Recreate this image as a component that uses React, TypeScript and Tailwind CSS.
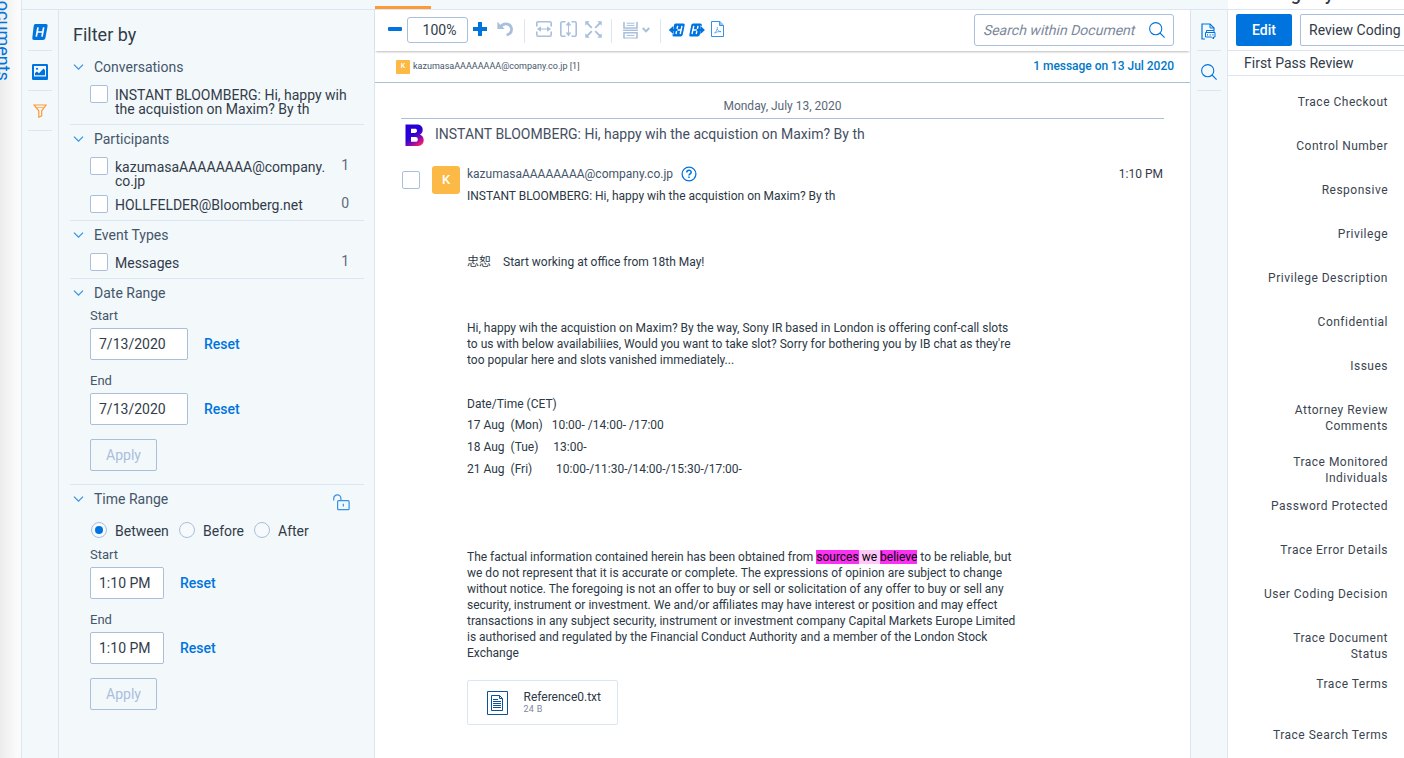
import type { ReactNode } from "react";

const BLUE = "#0074de";

function Check({ className = "" }: { className?: string }) {
  return <span className={`block h-[18px] w-[18px] shrink-0 rounded-[2px] border border-[#a9bfdb] bg-white ${className}`} />;
}

function Section({ title, children, last = false, extra }: { title: string; children: ReactNode; last?: boolean; extra?: ReactNode }) {
  return (
    <section className={`ml-[11px] mr-[10px] pt-[2px] ${last ? "" : "border-b border-[#dbe6f2]"}`}>
      <div className="flex h-6 items-center pl-[3px]">
        <svg width="12" height="8" viewBox="0 0 12 8" fill="none" stroke="#3391e6" strokeWidth="1.2" className="mr-[9px]">
          <path d="M1 1.6 5.5 6.1l4.5-4.5" />
        </svg>
        <h3 className="text-[14px] text-[#44566a]">{title}</h3>
        {extra}
      </div>
      {children}
    </section>
  );
}

function Option({ label, count, className }: { label: ReactNode; count?: string; className: string }) {
  return (
    <div className={`flex pl-5 ${className}`}>
      <Check />
      <span className="mt-[3px] ml-[7px] flex-1 whitespace-nowrap text-[14px] leading-[14px] text-[#323c49]">{label}</span>
      {count && <span className="mr-[15px] text-[14px] leading-4 text-[#5f6b7b]">{count}</span>}
    </div>
  );
}

function Field({ label, value, width }: { label: string; value: string; width: string }) {
  return (
    <div className="pl-5">
      <div className="h-[15px] text-[13px] leading-[15px] text-[#44566a]">{label}</div>
      <div className="mt-[5px] flex items-center">
        <span className={`flex h-8 items-center rounded-[2px] border border-[#a9bfdb] bg-white pl-2 text-[14px] text-[#323c49] ${width}`}>{value}</span>
        <button className="ml-4 text-[14px] font-medium text-[#0074de]">Reset</button>
      </div>
    </div>
  );
}

function Apply() {
  return (
    <button className="ml-5 flex h-8 w-[67px] items-center justify-center rounded-[2px] border border-[#a9bfdb] text-[14px] text-[#a9bfdb]">Apply</button>
  );
}

function Radio({ label, on = false, className = "" }: { label: string; on?: boolean; className?: string }) {
  return (
    <label className={`flex items-start ${className}`}>
      <span className="flex h-4 w-4 items-center justify-center rounded-full border border-[#a9bfdb] bg-[#f6fafc]">
        {on && <span className="h-2 w-2 rounded-full bg-[#0074de]" />}
      </span>
      <span className="mt-px ml-2 text-[14px] leading-4 text-[#323c49]">{label}</span>
    </label>
  );
}

function RailCell({ children }: { children: ReactNode }) {
  return <div className="flex h-10 w-6 items-center justify-center border-b border-[#dbe6f2] pt-[2px]">{children}</div>;
}

function SearchIcon() {
  return (
    <svg width="16" height="16" viewBox="0 0 16 16" fill="none" stroke={BLUE} strokeWidth="1.1">
      <circle cx="6.7" cy="6.7" r="6.1" />
      <path d="m11 11 4.6 4.6" />
    </svg>
  );
}

function Separator({ className }: { className: string }) {
  return <span className={`h-6 w-px bg-[#dbe6f2] ${className}`} />;
}

function HitArrow({ left = false }: { left?: boolean }) {
  return (
    <svg width="16" height="14" viewBox="0 0 16 14" fill="none">
      {left ? (
        <>
          <path d="M6.5.4h7.9q1.6 0 1.3 1.5L13.7 11.7q-.4 1.8-2.1 1.8H5q-1.8 0-1.5-1.6L5 2Q5.2.4 6.5.4Z" fill={BLUE} />
          <path d="M0 7 4.3 3v8Z" fill={BLUE} stroke="#fff" strokeWidth="1" paintOrder="stroke" />
          <path d="M8.7 2.8 8 5.8M7.6 8.2 7 11M13 2.8 11.2 11M8.500 7h3.800" stroke="#fff" strokeWidth="1.4" />
          <path d="M0 7 4.3 3.2v2.800H8v2H4.3v2.800Z" fill={BLUE} />
        </>
      ) : (
        <>
          <path d="M4 .4h7.5q1.6 0 1.3 1.5L10.8 11.7q-.4 1.8-2.1 1.8H1.600q-1.6 0-1.3-1.6L2.3 2Q2.6.4 4 .4Z" fill={BLUE} />
          <path d="M15.700 7 11.500 3v8Z" fill={BLUE} stroke="#fff" strokeWidth="1" paintOrder="stroke" />
          <path d="M4.8 2.8 3 11M9 2.8 8.4 5.8M7.9 8.2 7.2 11M4 7h3.800" stroke="#fff" strokeWidth="1.4" />
          <path d="M15.700 7 11.500 3.200v2.800H8.200v2h3.300v2.800Z" fill={BLUE} />
        </>
      )}
    </svg>
  );
}

function Toolbar() {
  return (
    <div className="z-10 flex h-[41px] shrink-0 items-center bg-white pl-[13px] shadow-[0_2px_2px_-1px_rgba(60,60,70,0.35)]">
      <span className="-mt-[3px] h-1 w-[14px] rounded-[1px] bg-[#0074de]" />
      <span className="-mt-px ml-[5px] flex h-[26px] w-[61px] items-center justify-center rounded-[3px] border border-[#a9bfdb] pl-[4px] text-[14px] text-[#323c49]">100%</span>
      <svg width="14" height="14" viewBox="0 0 14 14" className="ml-[5px] -mt-[3px]">
        <path d="M5 0h4v5h5v4H9v5H5V9H0V5h5Z" fill={BLUE} />
      </svg>
      <svg width="16" height="16" viewBox="0 0 16 16" fill="none" className="ml-[10px] -mt-[3px]">
        <path d="M3.2 6.5C5 3.5 8 2.4 10.6 3.1c4.7 1.5 5.1 7.4 1.7 9.7-.8.7-1.7 1-2.7 1.2" stroke="#a9bfdb" strokeWidth="2.8" />
        <path d="M.4.8 7.7 8H.4Z" fill="#a9bfdb" />
      </svg>
      <Separator className="ml-[11px]" />
      <svg width="16" height="16" viewBox="0 0 16 16" fill="none" stroke="#a9bfdb" strokeWidth="1.6" className="-mt-[3px] ml-[11px]">
        <path d="M.8 5.5V2.2q0-1.4 1.4-1.4h11.6q1.4 0 1.4 1.4V5.5M.8 10.5v3.3q0 1.4 1.4 1.4h11.6q1.4 0 1.4-1.4V10.5" />
        <path d="M2 8h12" strokeWidth="1" />
        <path d="M1 8l4-2.8v5.6ZM15 8l-4-2.8v5.6Z" fill="#a9bfdb" stroke="none" />
      </svg>
      <svg width="17" height="16" viewBox="0 0 17 16" fill="none" stroke="#a9bfdb" strokeWidth="1.6" className="-mt-[3px] ml-2">
        <path d="M5.5 .8H2.2Q.8 .8 .8 2.2v11.6q0 1.4 1.4 1.4h3.3M11.5 .8h3.3q1.4 0 1.4 1.4v11.6q0 1.4-1.4 1.4h-3.3" />
        <path d="M8.5 3v10" strokeWidth="1" />
        <path d="M8.5 .5 11.3 4.5h-5.6ZM8.5 15.5l2.8-4h-5.6Z" fill="#a9bfdb" stroke="none" />
      </svg>
      <svg width="17" height="17" viewBox="0 0 17 17" fill="none" stroke="#a9bfdb" strokeWidth="1.8" className="-mt-[3px] ml-2">
        <path d="m1.500 1.500 5.300 5.300M15.500 1.500l-5.300 5.300M1.500 15.500l5.300-5.300M15.500 15.500l-5.300-5.300" />
        <path d="M.3.300h4.400L.3 4.700ZM16.700.300v4.400L12.300.300ZM.3 16.700v-4.400l4.400 4.400ZM16.700 16.700h-4.400l4.400-4.400Z" fill="#a9bfdb" stroke="none" />
      </svg>
      <Separator className="ml-[9px]" />
      <svg width="15" height="17" viewBox="0 0 15 17" fill="none" stroke="#a9bfdb" className="-mt-px ml-[11px]">
        <path d="M1 0v6h13V0" strokeWidth="1.6" />
        <path d="M3.5 1.2h8M3.5 3.4h8" strokeWidth="1" />
        <path d="M0 8.3h15" strokeWidth="1.4" />
        <path d="M1 16.5V10.7h13v5.8" strokeWidth="1.6" />
        <path d="M3.5 13.4h8M1 16h13" strokeWidth="1" />
      </svg>
      <svg width="8" height="6" viewBox="0 0 8 6" fill="none" stroke="#a9bfdb" strokeWidth="2" className="-mt-[2px] ml-1">
        <path d="m.8 1 3.2 3.4L7.2 1" />
      </svg>
      <Separator className="ml-[10px]" />
      <span className="-mt-[2px] ml-2"><HitArrow left /></span>
      <span className="-mt-[2px] ml-1"><HitArrow /></span>
      <svg width="13" height="16" viewBox="0 0 13 16" fill="none" stroke="#3391e6" strokeWidth="1" className="-mt-[3px] ml-[6px]">
        <path d="M.5.5h8.3l3.7 3.7v11.3H.5Z" />
        <path d="M8.6.5v4h4" fill="#9cc8f2" />
        <path d="M3.3 12.3c2-1.6 3.3-4.3 3-6.3M6.3 8c.6 1.7 2 2.6 3.8 2.7-2.3-.3-4.4.2-6.3 1.3" strokeWidth=".7" />
      </svg>
      <div className="-mt-px mr-4 ml-auto flex h-8 w-[200px] items-center rounded-[3px] border border-[#a9bfdb] pr-2 pl-[9px]">
        <span className="inline-block -skew-x-[14deg] whitespace-nowrap text-[14px] text-[#7c889b]">Search within Document</span>
        <span className="ml-auto"><SearchIcon /></span>
      </div>
    </div>
  );
}

function Message() {
  return (
    <div className="w-[552px] text-[12px] leading-4 text-[#2c3845]">
      <p className="mt-[14px]">INSTANT BLOOMBERG: Hi, happy wih the acquistion on Maxim? By th</p>
      <p className="mt-[50px] h-4 font-['Roboto','Noto_Sans_CJK_SC',sans-serif]">忠恕<span className="ml-3">Start working at office from 18th May!</span></p>
      <p className="mt-[50px] whitespace-nowrap">
        Hi, happy wih the acquistion on Maxim? By the way, Sony IR based in London is offering conf-call slots<br />
        to us with below availabiliies, Would you want to take slot? Sorry for bothering you by IB chat as they're<br />
        too popular here and slots vanished immediately...
      </p>
      <p className="mt-7">Date/Time (CET)</p>
      <p className="mt-[5px] whitespace-pre">17 Aug  (Mon)   10:00- /14:00- /17:00</p>
      <p className="mt-[6px] whitespace-pre">18 Aug  (Tue)     13:00-</p>
      <p className="mt-[6px] whitespace-pre">21 Aug  (Fri)        10:00-/11:30-/14:00-/15:30-/17:00-</p>
      <p className="mt-[72px] whitespace-nowrap">
        The factual information contained herein has been obtained from{" "}
        <mark className="bg-[#ffc8fb] text-black"><span className="bg-[#fb32f3]">sources</span> we <span className="bg-[#fb32f3]">believe</span></mark> to be reliable, but<br />
        we do not represent that it is accurate or complete. The expressions of opinion are subject to change<br />
        without notice. The foregoing is not an offer to buy or sell or solicitation of any offer to buy or sell any<br />
        security, instrument or investment. We and/or affiliates may have interest or position and may effect<br />
        transactions in any subject security, instrument or investment company Capital Markets Europe Limited<br />
        is authorised and regulated by the Financial Conduct Authority and a member of the London Stock<br />
        Exchange
      </p>
      <div className="mt-[19px] flex h-[45px] w-[151px] items-center rounded-[2px] border border-[#dbe6f2] pl-[19px]">
        <svg width="21" height="24" viewBox="0 0 21 24" fill="none" stroke="#0b5296" strokeWidth="1">
          <path d="M.5 .5h20v23h-20Z" />
          <path d="M4.5 4.5h8l3 3v12h-11Z" />
          <path d="M12.5 4.5v3h3M6 8.5h5M6 10.5h8M6 12.5h8M6 14.5h8M6 16.5h8" />
        </svg>
        <div className="ml-[15.5px]">
          <div className="text-[12px] leading-[14px]">Reference0.txt</div>
          <div className="text-[9px] leading-[11px] tracking-[0.3px] text-[#7c889b]">24 B</div>
        </div>
      </div>
    </div>
  );
}

const fields: { label: string[]; gap: string }[] = [
  { label: ["Trace Checkout"], gap: "mt-[18px]" },
  { label: ["Control Number"], gap: "mt-7" },
  { label: ["Responsive"], gap: "mt-7" },
  { label: ["Privilege"], gap: "mt-7" },
  { label: ["Privilege Description"], gap: "mt-7" },
  { label: ["Confidential"], gap: "mt-7" },
  { label: ["Issues"], gap: "mt-7" },
  { label: ["Attorney Review", "Comments"], gap: "mt-7" },
  { label: ["Trace Monitored", "Individuals"], gap: "mt-5" },
  { label: ["Password Protected"], gap: "mt-3" },
  { label: ["Trace Error Details"], gap: "mt-7" },
  { label: ["User Coding Decision"], gap: "mt-7" },
  { label: ["Trace Document", "Status"], gap: "mt-7" },
  { label: ["Trace Terms"], gap: "mt-[14px]" },
  { label: ["Trace Search Terms"], gap: "mt-[35px]" },
];

export default function App() {
  return (
    <div className="flex h-[758px] w-[1404px] overflow-hidden bg-white font-['Roboto',sans-serif]">
      {/* collapsed documents tab */}
      <div className="flex h-full w-[22px] shrink-0 items-start overflow-hidden border-r border-[#dbe6f2] bg-linear-to-r from-[#ececec] to-[#fbfbfb] to-80%">
        <div className="flex h-[81px] w-[21px] shrink-0 items-end">
          <span className="-ml-[7px] text-[18px] leading-[21px] text-[#0074de] [writing-mode:vertical-rl]">Documents</span>
        </div>
      </div>

      <div className="flex w-[1206px] shrink-0 flex-col bg-[#f3f8fb]">
        <div className="flex h-[10px] shrink-0 items-end border-b border-[#dbe6f2] pl-[353px]">
          <span className="h-[3px] w-14 shrink-0 bg-[#fd9a35]" />
        </div>
        <div className="flex min-h-0 flex-1">
          <nav className="flex w-[37px] shrink-0 flex-col items-center border-r border-[#dbe6f2] pt-px">
            <RailCell>
              <svg width="16" height="16" viewBox="0 0 16 16">
                <path d="M3.3 0h10.7q2 0 1.6 2l-2.2 12q-.4 2-2.4 2H2Q0 16 .3 14L1.7 2Q2 0 3.3 0Z" fill={BLUE} />
                <path d="M6 3.3 4.3 12.7M11.7 3.3 10 12.7M5.3 8h5.6" stroke="#fff" strokeWidth="1.7" fill="none" />
              </svg>
            </RailCell>
            <RailCell>
              <svg width="16" height="16" viewBox="0 0 16 16">
                <rect width="16" height="16" rx="1.3" fill={BLUE} />
                <rect x="2" y="2" width="12" height="10.5" fill="#f3f8fb" />
                <circle cx="5" cy="4.8" r="1.1" fill={BLUE} />
                <path d="M3 11.2V9l2-1.6 2 1.8 4.5-4.7L13 6v5.2Z" fill={BLUE} />
              </svg>
            </RailCell>
            <RailCell>
              <svg width="14" height="14" viewBox="0 0 14 14" fill="none" stroke="#fd9a35" strokeWidth="1.2" className="mb-[2px]">
                <path d="M1 1h12L8.7 6.8v5.1L5.8 13.2V6.8Z" />
                <path d="M3.2 3.5h7.5" strokeWidth=".7" />
              </svg>
            </RailCell>
          </nav>

          <aside className="w-[316px] shrink-0 border-r border-[#dbe6f2]">
            <h2 className="h-[43px] pt-[14px] pl-[14px] text-[18px] leading-[22px] text-[#323c49]">Filter by</h2>
            <Section title="Conversations">
              <Option className="mt-[6px] h-[39px]" label={<>INSTANT BLOOMBERG: Hi, happy wih<br />the acquistion on Maxim? By th</>} />
            </Section>
            <Section title="Participants">
              <Option className="mt-[6px] h-[38px]" count="1" label={<>kazumasaAAAAAAAA@company.<br />co.jp</>} />
              <Option className="h-[25px]" count="0" label="HOLLFELDER@Bloomberg.net" />
            </Section>
            <Section title="Event Types">
              <Option className="mt-[6px] h-[25px]" count="1" label="Messages" />
            </Section>
            <Section title="Date Range">
              <div className="pt-[3px] pb-[13px]">
                <Field label="Start" value="7/13/2020" width="w-[98px]" />
                <div className="h-[13px]" />
                <Field label="End" value="7/13/2020" width="w-[98px]" />
                <div className="h-[14px]" />
                <Apply />
              </div>
            </Section>
            <Section
              title="Time Range"
              last
              extra={
                <svg width="17" height="17" viewBox="0 0 17 17" fill="none" stroke="#3391e6" strokeWidth="1.2" className="mt-[7px] mr-[14px] ml-auto">
                  <path d="M.7 6.5v-2a3.6 3.6 0 0 1 7.2 0v2.2" />
                  <rect x="4.6" y="6.7" width="11.5" height="9" rx="1" />
                  <path d="M10.3 9.8v2.8" />
                </svg>
              }
            >
              <div className="flex pt-[11px] pl-[21px]">
                <Radio label="Between" on className="w-[88px]" />
                <Radio label="Before" className="w-[75px]" />
                <Radio label="After" />
              </div>
              <div className="h-2" />
              <Field label="Start" value="1:10 PM" width="w-[74px]" />
              <div className="h-[13px]" />
              <Field label="End" value="1:10 PM" width="w-[74px]" />
              <div className="h-[14px]" />
              <Apply />
            </Section>
          </aside>

          <main className="flex w-[815px] shrink-0 flex-col bg-white">
            <Toolbar />
            <div className="flex h-8 shrink-0 items-center border-b border-[#a9bfdb] pr-4 pl-[21px]">
              <span className="flex h-[14px] w-[14px] items-center justify-center rounded-[1px] bg-[#fdb945] text-[7px] font-medium text-white">K</span>
              <span className="ml-[3px] text-[9px] text-[#44566a]">kazumasaAAAAAAAA@company.co.jp [1]</span>
              <span className="-mt-px ml-auto text-[12px] font-medium tracking-[-0.03px] text-[#0078c8]">1 message on 13 Jul 2020</span>
            </div>
            <div className="pt-[15px] pr-[26px] pl-[26px]">
              <div className="h-[21px] border-b border-[#a9bfdb] text-center text-[12px] leading-4 text-[#5b6778]">Monday, July 13, 2020</div>
              <div className="flex h-[30px] items-center pl-1">
                <svg width="19" height="23" viewBox="0 0 19 23" className="mt-[2px]">
                  <defs>
                    <linearGradient id="bGrad" x1=".2" y1=".1" x2=".75" y2="1">
                      <stop offset="0.4" stopColor="#2800d7" />
                      <stop offset="0.65" stopColor="#6a0ab8" />
                      <stop offset="1" stopColor="#ff1a70" />
                    </linearGradient>
                  </defs>
                  <path fillRule="evenodd" fill="url(#bGrad)" d="M.5.5h11c4 0 6.2 2 6.2 5.3 0 2.4-1 3.9-2.7 4.9 2.4.9 3.7 2.7 3.7 5.3 0 4-2.7 6-7 6H.5ZM6 4.8V8.9h3.7c1.5 0 2.3-.7 2.3-2.1s-.8-2-2.2-2ZM6 13.1v4.6h4.4c1.6 0 2.4-.8 2.4-2.3s-.9-2.3-2.5-2.3Z" />
                </svg>
                <span className="ml-[11px] text-[14px] text-[#44505f]">INSTANT BLOOMBERG: Hi, happy wih the acquistion on Maxim? By th</span>
              </div>
              <div className="flex pt-[17px]">
                <Check className="mt-[5px] ml-px" />
                <span className="ml-3 flex h-7 w-7 shrink-0 items-center justify-center rounded-[3px] bg-[#fdb945] text-[13px] font-medium text-white">K</span>
                <div className="ml-[7px] flex-1">
                  <div className="flex h-4 items-center text-[12px] text-[#44566a]">
                    kazumasaAAAAAAAA@company.co.jp
                    <svg width="16" height="16" viewBox="0 0 16 16" fill="none" stroke={BLUE} strokeWidth="1.3" className="ml-2">
                      <circle cx="8" cy="8" r="6.9" />
                      <path d="M5.8 6.5c0-3 4.4-2.9 4.4-.3 0 1.6-2.2 1.7-2.2 3.3M8 10.6v1.5" strokeWidth="1.5" />
                    </svg>
                    <span className="mr-px ml-auto text-[12px] text-[#323c49]">1:10 PM</span>
                  </div>
                  <div className="-mt-2"><Message /></div>
                </div>
              </div>
            </div>
          </main>

          <nav className="flex flex-1 flex-col items-center border-r border-l border-[#dbe6f2] pt-px">
            <RailCell>
              <svg width="16" height="17" viewBox="0 0 16 17" fill="none" stroke={BLUE} strokeWidth="1">
                <path d="M4 16H1V1h8l4 4v2.5" strokeWidth="1.2" />
                <path d="M9 1v4h4" />
                <path d="M5.5 7.5h7.5v2M5.5 7.5v2" />
                <path d="M4.5 9.5h9.5v4.5h-1.5v2l-2-2h-6Z" fill="#f3f8fb" />
                <path d="M6 11.8h1M8.7 11.8h1M11.4 11.8h1" strokeWidth="1.2" />
              </svg>
            </RailCell>
            <RailCell><SearchIcon /></RailCell>
          </nav>
        </div>
      </div>

      <div className="flex w-[176px] shrink-0 flex-col overflow-hidden">
        <div className="flex h-[10px] shrink-0 items-end border-b border-[#dbe6f2] pl-4">
          <h2 className="mb-[5px] text-[18px] leading-[21px] font-medium whitespace-nowrap text-[#323c49]">Coding Layout</h2>
        </div>
        <div className="flex h-[41px] shrink-0 items-center border-b border-[#dbe6f2] pl-2">
          <button className="h-8 w-14 shrink-0 rounded-[2px] bg-[#0074de] text-[14px] font-medium text-white">Edit</button>
          <button className="ml-2 flex h-8 w-[160px] shrink-0 items-center rounded-[2px] border border-[#a9bfdb] pt-px pl-2 text-[14px] text-[#323c49]">Review Coding</button>
        </div>
        <div className="flex h-[25px] shrink-0 items-center border-b border-[#dbe6f2] pl-4 text-[14px] text-[#323c49]">First Pass Review</div>
        <div className="pr-4 text-right text-[12px] leading-4 tracking-[0.5px] text-[#3a4450]">
          {fields.map((f) => (
            <div key={f.label[0]} className={f.gap}>
              {f.label.map((line) => (
                <div key={line}>{line}</div>
              ))}
            </div>
          ))}
        </div>
      </div>
    </div>
  );
}
